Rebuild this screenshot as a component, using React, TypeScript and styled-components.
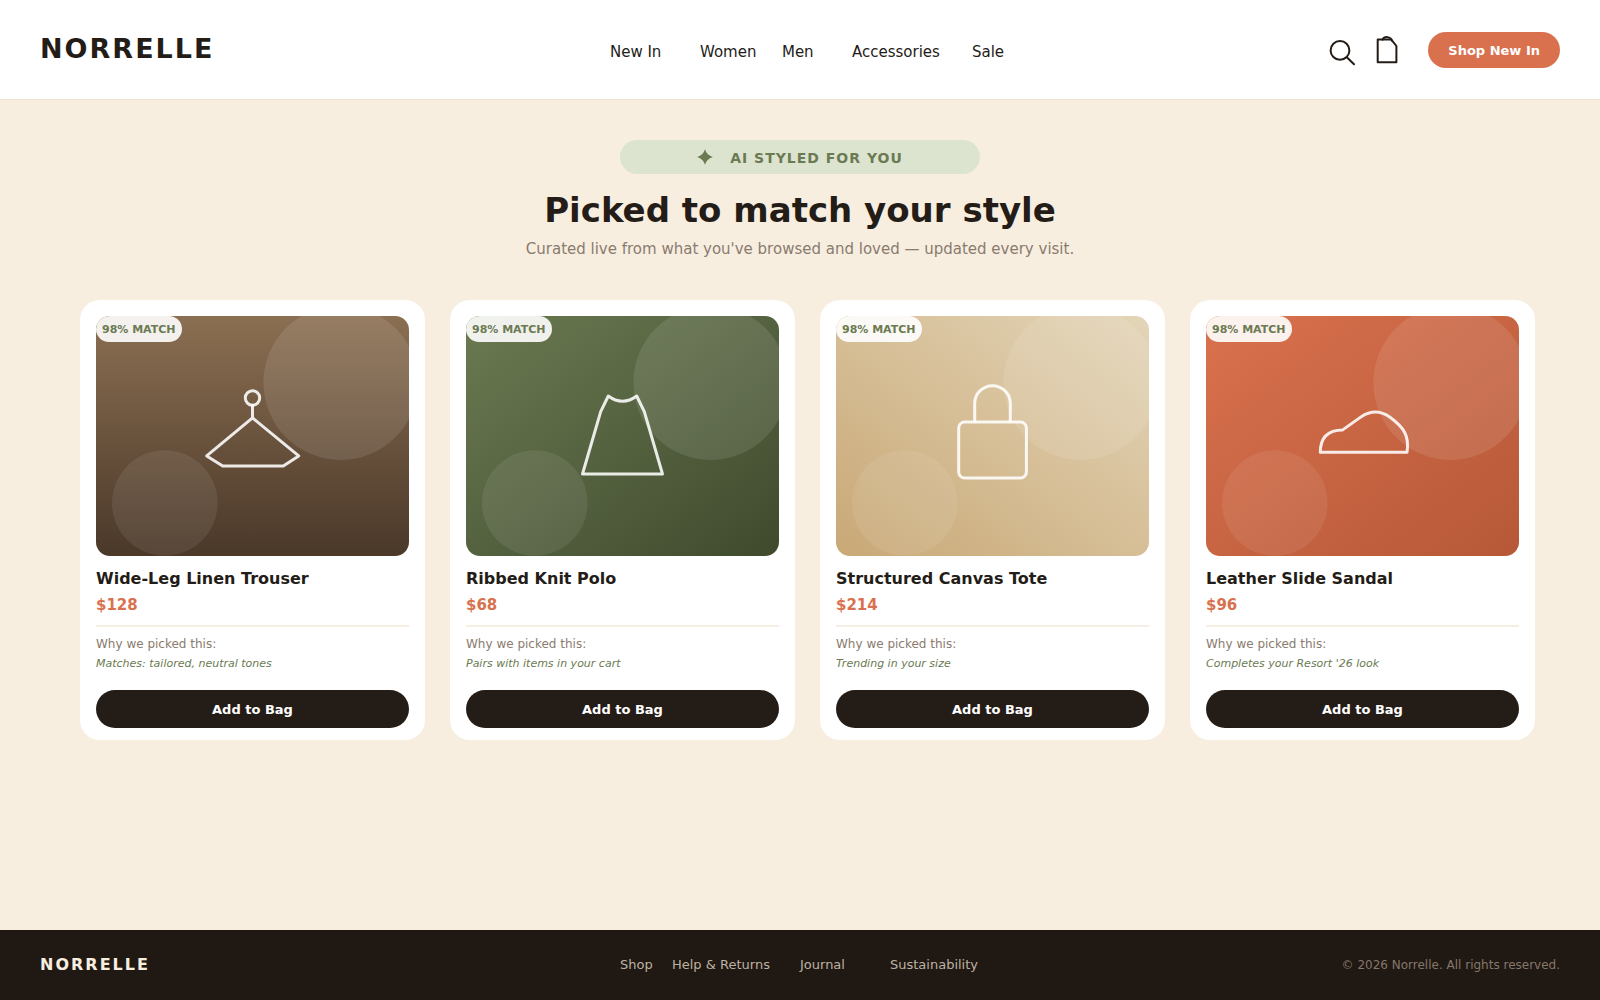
import React from "react";
import styled, { createGlobalStyle } from "styled-components";

const color = {
  ink: "#241c17",
  cream: "#f7eee0",
  coral: "#d9714e",
  sage: "#6b7a52",
  sageLight: "#dce4d0",
  muted: "#8a7b6e",
};

const GlobalStyle = createGlobalStyle`
  * { box-sizing: border-box; }
  body {
    margin: 0;
    background: ${color.cream};
    color: ${color.ink};
    font-family: "DejaVu Sans", Verdana, sans-serif;
  }
  h1, h2, p { margin: 0; }
  button { font-family: inherit; border: 0; cursor: pointer; }
  a { color: inherit; text-decoration: none; }
  svg { display: block; }
`;

const Page = styled.div`
  min-height: 100vh;
  display: flex;
  flex-direction: column;
`;

const Header = styled.header`
  display: grid;
  grid-template-columns: 1fr auto 1fr;
  align-items: center;
  height: 100px;
  padding: 0 40px;
  background: #ffffff;
  border-bottom: 1px solid #ece2d5;
`;

const Brand = styled.a<{ $size: "large" | "small" }>`
  justify-self: start;
  padding-bottom: 2px;
  font-weight: 700;
  font-size: ${(p) => (p.$size === "large" ? 27 : 16)}px;
  letter-spacing: 2px;
`;

const HeaderNav = styled.nav`
  display: grid;
  grid-template-columns: 90px 82px 70px 120px auto;
  padding: 4px 0 0 14px;
  font-size: 15px;
`;

const Actions = styled.div`
  display: flex;
  justify-content: flex-end;
  align-items: center;
`;

const IconButton = styled.button`
  display: grid;
  place-items: center;
  width: 44px;
  height: 32px;
  padding: 0;
  background: transparent;
  color: ${color.ink};
`;

const ShopButton = styled.button`
  height: 36px;
  margin-left: 20px;
  padding: 2px 20px 0;
  border-radius: 18px;
  background: ${color.coral};
  color: #ffffff;
  font-size: 13px;
  font-weight: 700;
`;

const Main = styled.main`
  flex: 1;
  padding: 40px 65px 40px 80px;
`;

const Hero = styled.section`
  display: flex;
  flex-direction: column;
  align-items: center;
  padding-right: 15px;
  text-align: center;
`;

const StyledTag = styled.div`
  display: flex;
  align-items: center;
  justify-content: center;
  gap: 17px;
  width: 360px;
  height: 34px;
  border-radius: 17px;
  background: ${color.sageLight};
  color: ${color.sage};
  font-size: 14px;
  font-weight: 700;
  letter-spacing: 1px;
`;

const TagLabel = styled.span`
  padding-top: 2px;
`;

const Heading = styled.h1`
  margin-top: 16px;
  font-size: 34px;
  line-height: 40px;
`;

const Lead = styled.p`
  margin-top: 9px;
  font-size: 15px;
  line-height: 20px;
  color: ${color.muted};
`;

const CardGrid = styled.section`
  display: grid;
  grid-template-columns: repeat(4, 1fr);
  gap: 25px;
  margin-top: 41px;
`;

const Card = styled.article`
  padding: 16px 16px 12px;
  border-radius: 20px;
  background: #ffffff;
`;

const Artwork = styled.div<{ $gradient: string }>`
  position: relative;
  height: 240px;
  overflow: hidden;
  border-radius: 14px;
  background: linear-gradient(${(p) => p.$gradient});
`;

const Badge = styled.span`
  position: absolute;
  top: 0;
  left: 0;
  padding: 1px 6px 0;
  border-radius: 13px;
  background: rgba(255, 255, 255, 0.9);
  color: ${color.sage};
  font-size: 11px;
  font-weight: 700;
  line-height: 25px;
`;

const CardTitle = styled.h2`
  margin-top: 13px;
  font-size: 16px;
  line-height: 20px;
`;

const Price = styled.p`
  margin-top: 6px;
  font-size: 15px;
  font-weight: 700;
  line-height: 20px;
  color: ${color.coral};
`;

const Reason = styled.div`
  margin: 10px 0 16px;
  padding-top: 7px;
  border-top: 2px solid #f6eee3;
  font-size: 12px;
  line-height: 20px;
  color: ${color.muted};
`;

const ReasonText = styled.p`
  font-size: 11px;
  font-style: italic;
  color: ${color.sage};
`;

const BagButton = styled.button`
  width: 100%;
  height: 38px;
  border-radius: 19px;
  background: ${color.ink};
  color: #ffffff;
  font-size: 13px;
  font-weight: 700;
`;

const Footer = styled.footer`
  display: grid;
  grid-template-columns: 1fr auto 1fr;
  align-items: center;
  height: 70px;
  padding: 0 40px;
  background: #201813;
  color: #f7eee0;
`;

const FooterNav = styled.nav`
  display: grid;
  grid-template-columns: 52px 128px 90px auto;
  padding: 0 2px 2px 0;
  font-size: 13px;
  color: #bdb1a1;
`;

const Copyright = styled.p`
  justify-self: end;
  font-size: 12px;
  color: #85776a;
`;

const SearchIcon = () => (
  <svg width="28" height="32" viewBox="0 0 28 32" fill="none" stroke="currentColor" strokeWidth="2" strokeLinecap="round" aria-hidden="true">
    <circle cx="12" cy="16.4" r="9.4" />
    <path d="M18.8 23.2L26 30.2" />
  </svg>
);

const BagIcon = () => (
  <svg width="28" height="28" viewBox="0 0 28 28" fill="none" stroke="currentColor" strokeWidth="2" strokeLinejoin="round" strokeLinecap="round" aria-hidden="true">
    <path d="M5.7 3.6H19.3L24.4 10V26.2H5.7Z" />
    <path d="M10.6 3.6C12.2 0.1 18.6 0.1 20 4.8" />
  </svg>
);

const SparkIcon = () => (
  <svg width="16" height="16" viewBox="0 0 16 16" fill="currentColor" aria-hidden="true">
    <path d="M8 0.2Q9.6 6 15.8 8Q9.6 10 8 15.8Q6.4 10 0.2 8Q6.4 6 8 0.2Z" />
  </svg>
);

const Drawing = ({ children }: { children: React.ReactNode }) => (
  <svg width="100%" height="240" viewBox="0 0 313 240" preserveAspectRatio="xMidYMid slice" aria-hidden="true">
    <circle cx="244.7" cy="66.7" r="77.3" fill="#ffffff" fillOpacity="0.1" />
    <circle cx="68.8" cy="187" r="52.8" fill="#ffffff" fillOpacity="0.08" />
    <g fill="none" stroke="#ffffff" strokeOpacity="0.88" strokeWidth="3" strokeLinejoin="round" strokeLinecap="round">
      {children}
    </g>
  </svg>
);

const products = [
  {
    name: "Wide-Leg Linen Trouser",
    price: "$128",
    reason: "Matches: tailored, neutral tones",
    gradient: "180deg, #8b6f52, #4a3829",
    art: (
      <>
        <circle cx="156.5" cy="82" r="7.2" />
        <path d="M156.5 89.2V101.7M156.5 101.9L110.7 139.9L126.7 150H187.3L202.7 139.9Z" />
      </>
    ),
  },
  {
    name: "Ribbed Knit Polo",
    price: "$68",
    reason: "Pairs with items in your cart",
    gradient: "to bottom right, #6b7a52, #3f4a2d",
    art: <path d="M142.3 80Q156.5 90.5 170.7 80L178.3 95.7L196.5 158H116.5L134.7 95.7Z" />,
  },
  {
    name: "Structured Canvas Tote",
    price: "$214",
    reason: "Trending in your size",
    gradient: "to top right, #c9a876, #e3d5b8",
    art: (
      <>
        <rect x="122.7" y="106" width="67.7" height="56" rx="6" />
        <path d="M138.7 105V87.5A17.8 17.8 0 0 1 174.3 87.5V105" />
      </>
    ),
  },
  {
    name: "Leather Slide Sandal",
    price: "$96",
    reason: "Completes your Resort '26 look",
    gradient: "to bottom right, #d9714e, #b65837",
    art: <path d="M114.3 136.3C114.3 121 122 114 136.7 113.9L155 100.9C165 94.3 175 94.8 184 101.3C198 111.5 203.5 120 201 136.3Z" />,
  },
];

const ProductCard = ({ product }: { product: (typeof products)[number] }) => (
  <Card>
    <Artwork $gradient={product.gradient}>
      <Drawing>{product.art}</Drawing>
      <Badge>98% MATCH</Badge>
    </Artwork>
    <CardTitle>{product.name}</CardTitle>
    <Price>{product.price}</Price>
    <Reason>
      <p>Why we picked this:</p>
      <ReasonText>{product.reason}</ReasonText>
    </Reason>
    <BagButton type="button">Add to Bag</BagButton>
  </Card>
);

const headerLinks = ["New In", "Women", "Men", "Accessories", "Sale"];
const footerLinks = ["Shop", "Help & Returns", "Journal", "Sustainability"];

export default function App() {
  return (
    <>
      <GlobalStyle />
      <Page>
        <Header>
          <Brand href="#" $size="large">NORRELLE</Brand>
          <HeaderNav aria-label="Main">
            {headerLinks.map((label) => (
              <a key={label} href="#">{label}</a>
            ))}
          </HeaderNav>
          <Actions>
            <IconButton type="button" aria-label="Search"><SearchIcon /></IconButton>
            <IconButton type="button" aria-label="Bag"><BagIcon /></IconButton>
            <ShopButton type="button">Shop New In</ShopButton>
          </Actions>
        </Header>
        <Main>
          <Hero>
            <StyledTag>
              <SparkIcon />
              <TagLabel>AI STYLED FOR YOU</TagLabel>
            </StyledTag>
            <Heading>Picked to match your style</Heading>
            <Lead>Curated live from what you've browsed and loved — updated every visit.</Lead>
          </Hero>
          <CardGrid>
            {products.map((product) => (
              <ProductCard key={product.name} product={product} />
            ))}
          </CardGrid>
        </Main>
        <Footer>
          <Brand href="#" $size="small">NORRELLE</Brand>
          <FooterNav aria-label="Footer">
            {footerLinks.map((label) => (
              <a key={label} href="#">{label}</a>
            ))}
          </FooterNav>
          <Copyright>© 2026 Norrelle. All rights reserved.</Copyright>
        </Footer>
      </Page>
    </>
  );
}
